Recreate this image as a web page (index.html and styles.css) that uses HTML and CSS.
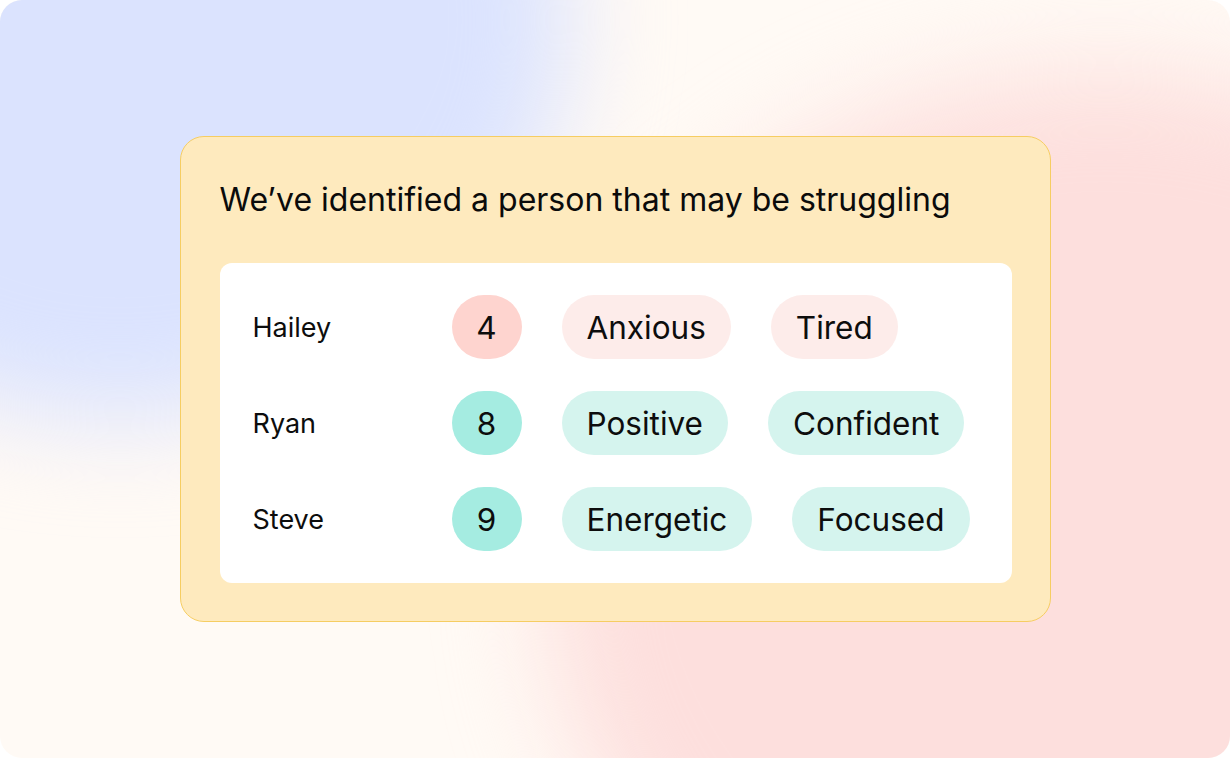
FILE: index.html
```html
<!DOCTYPE html>
<html lang="en">
<head>
<meta charset="utf-8">
<title>Struggling person</title>
<link rel="stylesheet" href="styles.css">
</head>
<body>
<div class="canvas">
  <div class="blob blob-blue"></div>
  <div class="blob blob-pink"></div>
  <div class="card">
    <h1 class="title">We’ve identified a person that may be struggling</h1>
    <div class="panel">
      <div class="row">
        <span class="name">Hailey</span>
        <span class="score score-low">4</span>
        <span class="tag tag-low">Anxious</span>
        <span class="tag tag-low">Tired</span>
      </div>
      <div class="row">
        <span class="name">Ryan</span>
        <span class="score score-high">8</span>
        <span class="tag tag-high">Positive</span>
        <span class="tag tag-high">Confident</span>
      </div>
      <div class="row">
        <span class="name">Steve</span>
        <span class="score score-high">9</span>
        <span class="tag tag-high">Energetic</span>
        <span class="tag tag-high">Focused</span>
      </div>
    </div>
  </div>
</div>
</body>
</html>
```

FILE: styles.css
```css
* { box-sizing: border-box; }
html, body { margin: 0; padding: 0; background: #ffffff; }
body { font-family: Inter, "Noto Sans", sans-serif; color: #0d0d0d; }

.canvas {
  position: relative;
  width: 1230px;
  height: 758px;
  border-radius: 22px;
  overflow: hidden;
  background: #fffaf5;
  display: flex;
  align-items: center;
  justify-content: center;
}

.blob {
  position: absolute;
  border-radius: 50%;
  filter: blur(50px);
}
.blob-blue {
  left: -330px;
  top: -380px;
  width: 900px;
  height: 800px;
  background: #dbe3fe;
}
.blob-pink {
  left: 545px;
  top: 70px;
  width: 1120px;
  height: 1000px;
  background: #fddfdd;
}

.card {
  position: relative;
  width: 871px;
  height: 486px;
  padding: 40px 38px 40px 39px;
  background: #feeabe;
  border: 1.5px solid #f6cd62;
  border-radius: 24px;
}

.title {
  margin: 0 0 40px;
  font-size: 32px;
  line-height: 46px;
  font-weight: 400;
  letter-spacing: 0;
  color: #0b0b0b;
}

.panel {
  background: #ffffff;
  border-radius: 12px;
  padding: 32px 33px;
  display: flex;
  flex-direction: column;
  gap: 32px;
}

.row {
  display: flex;
  align-items: center;
  gap: 40px;
  height: 64px;
}

.name {
  width: 159px;
  font-size: 27px;
}

.score, .tag {
  height: 64px;
  border-radius: 32px;
  display: inline-flex;
  align-items: center;
  justify-content: center;
  font-size: 31.5px;
}
.score { width: 70px; }
.tag { padding: 0 25px; }

.score-low { background: #fed4cf; }
.tag-low { background: #fdecea; }
.score-high { background: #a5ece1; }
.tag-high { background: #d5f4ee; }
```
